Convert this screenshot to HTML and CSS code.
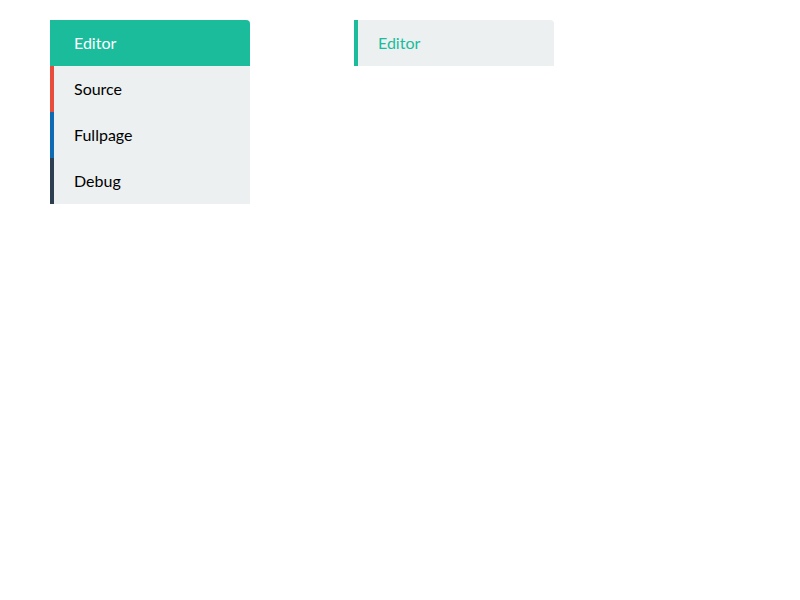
FILE: index.html
```html
<!DOCTYPE html>
<html>
<head>
<meta charset="utf-8">
<link rel="stylesheet" href="styles.css">
</head>
<body>
<div class="page">
  <ul class="menu">
    <li class="item active green">Editor</li>
    <li class="item red">Source</li>
    <li class="item blue">Fullpage</li>
    <li class="item dark">Debug</li>
  </ul>
  <ul class="menu single">
    <li class="item green hover">Editor</li>
  </ul>
</div>
</body>
</html>
```
FILE: styles.css
```css
html, body { margin: 0; padding: 0; background: #fff; }
body { font-family: Lato, "Open Sans", sans-serif; font-size: 16px; }
.page { display: flex; gap: 104px; padding: 20px 0 0 50px; align-items: flex-start; }
.menu { list-style: none; margin: 0; padding: 0; width: 200px; border-top-right-radius: 4px; overflow: hidden; background: #ecf0f1; }
.item { height: 46px; line-height: 46px; padding-left: 20px; border-left: 4px solid transparent; color: #000; box-sizing: border-box; }
.green { border-left-color: #1abc9c; }
.red { border-left-color: #e74c3c; }
.blue { border-left-color: #0f6ab4; }
.dark { border-left-color: #2c3e50; }
.active { background: #1abc9c; color: #fff; }
.hover { color: #1abc9c; }
```
